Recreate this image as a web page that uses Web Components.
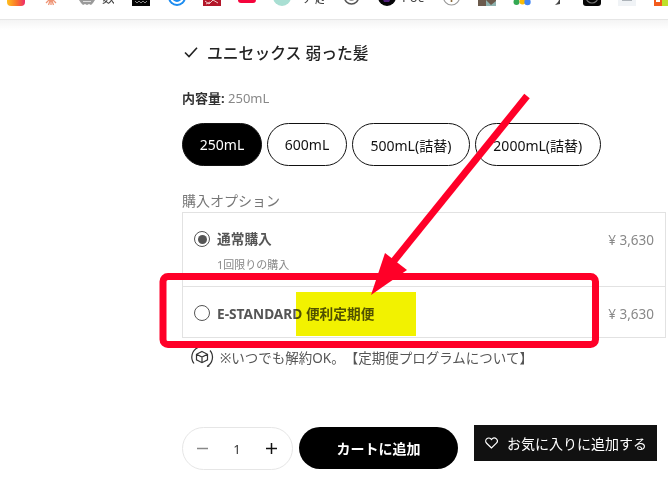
<!DOCTYPE html>
<html lang="ja">
<head>
<meta charset="utf-8">
<title>E-STANDARD</title>
<style>
  html, body { margin: 0; padding: 0; background: #fff; }
  body { width: 668px; height: 492px; overflow: hidden; position: relative; font-family: "Noto Sans", "Noto Sans CJK JP", sans-serif; }
</style>
</head>
<body>
<bookmark-bar></bookmark-bar>
<product-panel>
  <check-title>ユニセックス 弱った髪</check-title>
  <size-picker value="250mL" options="250mL,600mL,500mL(詰替),2000mL(詰替)"></size-picker>
  <purchase-options></purchase-options>
  <subscription-note>※いつでも解約OK。【定期便プログラムについて】</subscription-note>
  <buy-row></buy-row>
</product-panel>
<markup-layer></markup-layer>

<script>
// icons of the bookmark strip, only their lower edge is visible: [gap before, svg or text]
const marcas = [
  [7, '<svg width="18" height="18"><defs><linearGradient id="ig" x1="0" y1="0" x2="1" y2="0"><stop offset="0" stop-color="#ffc01e"/><stop offset=".55" stop-color="#f9732b"/><stop offset="1" stop-color="#ee2a6b"/></linearGradient></defs><rect width="18" height="18" rx="4" fill="url(#ig)"/><rect x="3.5" y="-4" width="11" height="7.5" rx="3" fill="none" stroke="#fff" stroke-width="1.2"/></svg>'],
  [19, '<svg width="14" height="18"><g stroke="#ee9475" stroke-width="1.3"><path d="M7 10v7M7 10l-5 5M7 10l5 5M7 10l-2.5 7M7 10l2.5 7"/></g></svg>'],
  [21, '<svg width="16" height="18"><path d="M0 12h16l-2 3-2 2-2-1-2 1-2-1-2 1-2-2z" fill="#9a9a9a"/><path d="M4 13h8v1H4z" fill="#ddd"/></svg>'],
  [7, '<span class="txt" style="width:12px">数</span>'],
  [18, '<svg width="18" height="18"><rect width="18" height="18" fill="#050505"/><path d="M3 13l2 2 2-2 2 2 2-2 2 2 2-2" stroke="#888" fill="none"/></svg>'],
  [18, '<svg width="18" height="18"><circle cx="9" cy="9" r="9" fill="#1d8cf0"/><path d="M3 9a6 6 0 0 0 12 0" fill="none" stroke="#fff" stroke-width="2"/></svg>'],
  [17, '<svg width="18" height="18"><rect width="18" height="18" fill="#b3172a"/><path d="M2 13l4 3 4-4 5 3M3 16l4-2" stroke="#f0c8c8" fill="none"/></svg>'],
  [17, '<svg width="18" height="15"><rect width="18" height="15" rx="3" fill="#f5043c"/></svg>'],
  [17, '<svg width="18" height="18"><circle cx="9" cy="9" r="9" fill="#a9dfd3"/></svg>'],
  [11, '<span class="txt" style="width:22px">ア超</span>'],
  [20, '<svg width="15" height="18"><circle cx="7.5" cy="9" r="7" fill="none" stroke="#555" stroke-width="1.6"/><circle cx="7.5" cy="9" r="3.5" fill="none" stroke="#777"/></svg>'],
  [19, '<svg width="18" height="18"><circle cx="9" cy="9" r="9" fill="#060608"/><path d="M4 9h10l-3 5H6z" fill="#51207c"/></svg>'],
  [6, '<span class="txt" style="width:22px">Poc</span>'],
  [19, '<svg width="17" height="18"><circle cx="8.5" cy="9" r="8" fill="#fff" stroke="#999" stroke-width="1.2"/><path d="M8.5 9v5" stroke="#8a6a3a" stroke-width="1.6"/></svg>'],
  [18, '<svg width="18" height="18"><rect width="18" height="18" fill="#6b5a4c"/><path d="M8 12l5 5 5-4v5H8z" fill="#8fb3b0"/></svg>'],
  [17, '<svg width="18" height="18"><circle cx="3.5" cy="14" r="3" fill="#34a853"/><circle cx="9.5" cy="13.5" r="3" fill="#fbbc04"/><circle cx="14.5" cy="14" r="3.2" fill="#4285f4"/></svg>'],
  [21, '<svg width="10" height="18"><path d="M8 10v6l-5 1 3-3z" fill="#444"/></svg>'],
  [21, '<svg width="18" height="18"><rect width="18" height="18" rx="3" fill="#060606"/><circle cx="9" cy="9" r="6" fill="none" stroke="#777" stroke-width="1.2"/></svg>'],
  [17, '<svg width="18" height="18"><rect width="18" height="18" fill="#f0f3f6"/><rect x="4" y="11" width="10" height="2" fill="#aeb4ba"/></svg>'],
  [18, '<svg width="16" height="18"><rect width="8" height="18" fill="#f35b1c"/><rect x="8" width="8" height="18" fill="#bde02a"/><rect x="2" y="11" width="4" height="3" fill="#fff"/></svg>']
];

class BookmarkBar extends HTMLElement {
  connectedCallback() {
    const shadow = this.attachShadow({ mode: 'open' });
    shadow.innerHTML = `
      <style>
        :host { display: block; height: 30px; background: linear-gradient(#f3f3f3 19px, #ffffff 30px); }
        .barra { height: 19px; background: #fff; border-bottom: 1px solid #e6e6e6; box-sizing: content-box; overflow: hidden; display: flex; align-items: flex-start; }
        .item { flex: none; margin-top: -12px; height: 18px; }
        svg { display: block; }
        .txt { display: block; height: 18px; font: 13px/18px "Noto Sans", "Noto Sans CJK JP", sans-serif; color: #444; white-space: nowrap; overflow: hidden; }
      </style>
      <div class="barra">
        ${marcas.map(([gap, html]) => `<div class="item" style="margin-left:${gap}px">${html}</div>`).join('')}
      </div>
    `;
  }
}

class ProductPanel extends HTMLElement {
  connectedCallback() {
    const shadow = this.attachShadow({ mode: 'open' });
    shadow.innerHTML = `
      <style>
        :host { display: block; padding-left: 182px; }
      </style>
      <slot></slot>
    `;
  }
}

class CheckTitle extends HTMLElement {
  connectedCallback() {
    const shadow = this.attachShadow({ mode: 'open' });
    shadow.innerHTML = `
      <style>
        :host { display: flex; align-items: center; gap: 9px; height: 24px; margin-top: 10px; padding-left: 2px; font-size: 15.8px; font-weight: 500; color: #222; }
        svg { flex: none; }
      </style>
      <svg width="14" height="12" viewBox="0 0 14 12"><path d="M1 6.5l4 4L13 1.8" fill="none" stroke="#222" stroke-width="1.6"/></svg>
      <span><slot></slot></span>
    `;
  }
}

class SizePicker extends HTMLElement {
  connectedCallback() {
    const shadow = this.attachShadow({ mode: 'open' });
    const actual = this.getAttribute('value');
    const opciones = this.getAttribute('options').split(',');
    shadow.innerHTML = `
      <style>
        :host { display: block; margin-top: 23px; }
        .etiqueta { height: 22px; line-height: 22px; font-size: 13px; color: #888; }
        b { color: #333; font-weight: 700; }
        .pills { display: flex; gap: 5px; margin-top: 14px; }
        button { height: 43px; padding: 0 17.5px; box-sizing: border-box; border: 1px solid #111; border-radius: 22px; background: #fff; color: #111; font: 14px "Noto Sans", "Noto Sans CJK JP", sans-serif; white-space: nowrap; }
        button.corto { width: 80px; padding: 0; }
        button.activo { background: #000; color: #fff; }
      </style>
      <div class="etiqueta"><b>内容量:</b> ${actual}</div>
      <div class="pills">
        ${opciones.map(o => `<button class="${o === actual ? 'activo ' : ''}${o.length < 6 ? 'corto' : ''}">${o}</button>`).join('')}
      </div>
    `;
  }
}

class PurchaseOptions extends HTMLElement {
  connectedCallback() {
    const shadow = this.attachShadow({ mode: 'open' });
    shadow.innerHTML = `
      <style>
        :host { display: block; margin-top: 23px; width: 484px; }
        .titulo { height: 23px; line-height: 23px; font-size: 14px; color: #777; }
        .caja { border: 1px solid #e2e2e2; }
        .fila { display: flex; padding: 0 11px; box-sizing: border-box; }
        .fila + .fila { border-top: 1px solid #e2e2e2; }
        .uno { height: 73px; padding-top: 18px; }
        .dos { height: 51px; align-items: center; padding-top: 3px; }
        .dos .radio { margin-bottom: 2px; }
        .radio { flex: none; width: 14px; height: 14px; border: 1px solid #555; border-radius: 50%; display: grid; place-items: center; margin-right: 7px; background: #fff; }
        .radio.on::after { content: ""; width: 9px; height: 9px; border-radius: 50%; background: #555; }
        .centro { flex: 1; }
        .uno .nombre { margin-top: -1px; }
        .nombre { height: 18px; line-height: 18px; font-size: 13.7px; font-weight: 700; color: #555; }
        .sub { margin-top: 9px; height: 16px; line-height: 16px; font-size: 11px; color: #888; }
        .precio { font-size: 13.5px; line-height: 18px; color: #888; }
      </style>
      <div class="titulo">購入オプション</div>
      <div class="caja">
        <div class="fila uno">
          <span class="radio on"></span>
          <div class="centro">
            <div class="nombre">通常購入</div>
            <div class="sub">1回限りの購入</div>
          </div>
          <div class="precio">¥ 3,630</div>
        </div>
        <div class="fila dos">
          <span class="radio"></span>
          <div class="centro"><div class="nombre">E-STANDARD 便利定期便</div></div>
          <div class="precio">¥ 3,630</div>
        </div>
      </div>
    `;
  }
}

class SubscriptionNote extends HTMLElement {
  connectedCallback() {
    const shadow = this.attachShadow({ mode: 'open' });
    shadow.innerHTML = `
      <style>
        :host { display: flex; align-items: center; gap: 6px; height: 24px; margin-top: 7px; padding-left: 8px; font-size: 13.5px; color: #555; white-space: nowrap; text-spacing-trim: space-all; }
        svg { flex: none; }
      </style>
      <svg width="24" height="24" viewBox="0 0 24 24" fill="none" stroke="#333" stroke-width="1.2">
        <path d="M4 18.5A10.5 10.5 0 0 1 8 2.5M20 5.5a10.5 10.5 0 0 1-3 16M8 2.5l-2.4.4M17 21.5l2.4-.6"/>
        <path d="M12 6.5l5.5 2.8v5.6L12 17.7l-5.5-2.8V9.3zM6.5 9.3l5.5 2.8 5.5-2.8M12 12.1v5.6"/>
      </svg>
      <span><slot></slot></span>
    `;
  }
}

class BuyRow extends HTMLElement {
  connectedCallback() {
    const shadow = this.attachShadow({ mode: 'open' });
    shadow.innerHTML = `
      <style>
        :host { display: flex; align-items: flex-start; margin-top: 56px; }
        .cantidad { display: flex; align-items: center; justify-content: space-between; box-sizing: border-box; width: 111px; height: 43px; margin-top: 2px; padding: 0 15px 0 14px; border: 1px solid #e6e6e6; border-radius: 22px; color: #333; font-size: 13px; }
        .cantidad svg { display: block; }
        .carrito { width: 159px; height: 42px; margin: 2px 0 0 6px; border: 0; border-radius: 21px; background: #000; color: #fff; font: 700 14px "Noto Sans", "Noto Sans CJK JP", sans-serif; }
        .favorito { display: flex; align-items: center; gap: 9px; width: 183px; height: 36px; box-sizing: border-box; margin-left: 16px; padding-left: 11px; border: 0; background: #111; color: #fff; font: 14px "Noto Sans", "Noto Sans CJK JP", sans-serif; white-space: nowrap; }
      </style>
      <div class="cantidad">
        <svg width="11" height="11"><path d="M0 5.5h11" stroke="#888" stroke-width="1.5"/></svg>
        <span>1</span>
        <svg width="11" height="11"><path d="M0 5.5h11M5.5 0v11" stroke="#111" stroke-width="1.5"/></svg>
      </div>
      <button class="carrito">カートに追加</button>
      <button class="favorito">
        <svg width="13" height="12" viewBox="0 0 13 12"><path d="M6.5 11L1.6 6.2a3 3 0 0 1 4.3-4.3l.6.7.6-.7a3 3 0 0 1 4.3 4.3z" fill="none" stroke="#fff" stroke-width="1.2"/></svg>
        <span>お気に入りに追加する</span>
      </button>
    `;
  }
}

// hand drawn annotation on top of the screenshot
class MarkupLayer extends HTMLElement {
  connectedCallback() {
    const shadow = this.attachShadow({ mode: 'open' });
    shadow.innerHTML = `
      <style>
        :host { position: absolute; left: 0; top: 0; width: 668px; height: 492px; pointer-events: none; }
        svg { position: absolute; left: 0; top: 0; }
        .amarillo { mix-blend-mode: multiply; }
      </style>
      <svg class="amarillo" width="668" height="492"><rect x="296" y="292" width="120" height="44" fill="#f2f200"/></svg>
      <svg width="668" height="492">
        <rect x="163" y="276.5" width="432.5" height="68" rx="5" fill="none" stroke="#ff0028" stroke-width="7"/>
        <path d="M527 96L393 262" fill="none" stroke="#ff0028" stroke-width="7"/>
        <path d="M371 295L385 253 407 270z" fill="#ff0028"/>
      </svg>
    `;
  }
}

customElements.define('bookmark-bar', BookmarkBar);
customElements.define('product-panel', ProductPanel);
customElements.define('check-title', CheckTitle);
customElements.define('size-picker', SizePicker);
customElements.define('purchase-options', PurchaseOptions);
customElements.define('subscription-note', SubscriptionNote);
customElements.define('buy-row', BuyRow);
customElements.define('markup-layer', MarkupLayer);
</script>
</body>
</html>
